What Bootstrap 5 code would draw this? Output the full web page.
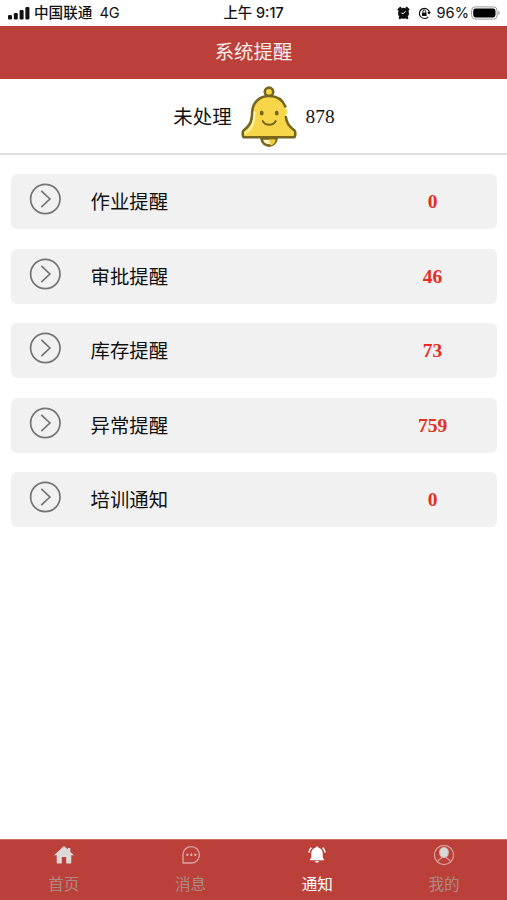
<!DOCTYPE html>
<html lang="zh-CN">
<head>
<meta charset="utf-8">
<meta name="viewport" content="width=device-width, initial-scale=1">
<title>系统提醒</title>
<link href="https://cdn.jsdelivr.net/npm/bootstrap@5.3.0/dist/css/bootstrap.min.css" rel="stylesheet">
<style>
body{font-family:Inter,"Noto Sans CJK SC",sans-serif;color:#111;background:#fff;line-height:1}
svg{display:block;flex:none}
.status{height:26px;font-size:14.6px;font-weight:500;padding:0 6px 0 8px}
.status>div{flex:1 1 0}
.status .clock{flex:none;font-size:14.4px;padding:1px 2px 0 0}
.status .thin{font-weight:400}
.status .network{margin-left:7px}
.status .percent{margin:0 2px 0 6px}
.brand-bg{background:#bb4039}
.title-bar{height:53px;font-size:19.4px;color:#fbeceb;padding-top:1px}
.summary{height:76px;border-bottom:2px solid #dedede;font-size:19.4px;padding-top:1px}
.summary .caption{padding-top:2px;margin-left:1px}
.bell{margin:0 9px 0 9px}
.serif-num{font-family:"Liberation Serif","Times New Roman",serif}
.rows{padding:19px 10px 0 11px;gap:19.5px}
.row-item{height:55px;background:#f1f1f1;border-radius:6px;font-size:19.4px;padding-left:18px}
.row-item svg{margin-top:-5px;margin-right:29.5px}
.row-item .label-text{padding-top:3px}
.row-item .serif-num{width:129px;color:#e32f22;font-size:19.5px;padding-top:1px}
.tabs{height:61px;font-size:15.6px;border-top:1px solid #cf6a65}
.tabs a{color:#ad8a83;padding:4px 0 0 1px;gap:10.5px}
.tabs a.active{color:#fff}
</style>
</head>
<body class="d-flex flex-column vh-100 overflow-hidden">
<div class="status d-flex align-items-center">
  <div class="d-flex align-items-center">
    <svg width="22" height="14" viewBox="0 0 22 14" fill="#111"><rect x="0" y="9" width="4" height="4.5" rx="1.2"/><rect x="5.8" y="7" width="4" height="6.5" rx="1.2"/><rect x="11.6" y="4" width="4" height="9.5" rx="1.2"/><rect x="17.4" y="1" width="4" height="12.5" rx="1.2"/></svg>
    <span class="ms-1">中国联通</span><span class="network thin">4G</span>
  </div>
  <div class="clock">上午 9:17</div>
  <div class="d-flex align-items-center justify-content-end">
    <svg width="13" height="14" viewBox="0 0 13 14"><circle cx="6.5" cy="7.3" r="5.5" fill="#111"/><path d="M1 4.2 4 1.3M12 4.2 9 1.3M2.2 12.8l1.5-1.7M10.8 12.8l-1.5-1.7" stroke="#111" stroke-width="2.2"/><path d="M8.500 5.200 6.300 7.700 4.500 7" stroke="#fff" stroke-width="1" fill="none"/></svg>
    <svg class="ms-2" width="13" height="14" viewBox="0 0 13 14" fill="none" stroke="#111"><path d="M10.3 10.8A5.1 5.1 0 1 1 11.4 6" stroke-width="1.2"/><path d="M9.2 6h3.800l-1.900 2.500z" fill="#111" stroke="none"/><rect x="4" y="6.400" width="4.600" height="3.600" rx=".5" fill="#111" stroke="none"/><path d="M4.900 6.500V5.400a1.400 1.400 0 0 1 2.800 0v1.100"/></svg>
    <span class="percent thin">96%</span>
    <svg width="30" height="14" viewBox="0 0 30 14"><rect x=".6" y=".9" width="25.500" height="12.200" rx="3.600" fill="none" stroke="#999"/><rect x="2.200" y="2.500" width="22.300" height="9" rx="2.400" fill="#000"/><path d="M27.400 5c1.800.7 1.800 3.300 0 4z" fill="#999"/></svg>
  </div>
</div>
<header class="title-bar brand-bg d-flex align-items-center justify-content-center">系统提醒</header>
<section class="summary d-flex align-items-center justify-content-center">
  <span class="caption">未处理</span>
  <svg class="bell" width="56" height="62" viewBox="0 0 56 62" fill="none" stroke="#76651d" stroke-width="2.600" stroke-linecap="round" stroke-linejoin="round">
    <path d="M20.500 52.500c1 9.500 14 9.500 15 0z" fill="#fff5bd"/><path d="M28 53.500h6.500c0 3-2.200 5.500-5 6z" fill="#f3cc3c" stroke="none"/>
    <circle cx="28" cy="5.800" r="4.200" fill="#f7d84e"/>
    <path d="M44.300 20.500C41.500 13.500 35 10 28 10 18 10 11.500 17 11.200 26 11 36.500 8 40.500 2.500 44.500 1.200 45.500 1.500 51.300 3.200 51.300H52.800C54.500 51.300 54.800 45.500 53.500 44.500 48 40.500 45.200 37 44.900 31" fill="#f7d749"/>
    <path d="M13.500 26c0 11-2 16-9 21.500" stroke="#fff2ae" stroke-width="2"/>
    <path d="M45.200 23.500v4.500" stroke="#f7d749" stroke-width="2" stroke-linecap="butt"/>
    <ellipse cx="20.700" cy="27" rx="1.900" ry="2.600" fill="#76651d" stroke="none"/><ellipse cx="35.700" cy="27" rx="1.900" ry="2.600" fill="#76651d" stroke="none"/><path d="M21.700 35c2.500 5 10.500 5 13 0" stroke-width="1.900"/>
  </svg>
  <span class="serif-num">878</span>
</section>
<main class="rows d-flex flex-column flex-grow-1">
  <div class="row-item d-flex align-items-center"><svg width="32" height="32" viewBox="0 0 32 32" fill="none" stroke="#747474" stroke-width="1.700"><circle cx="16.300" cy="16" r="14.700"/><path d="m12.300 7.800 8.600 8.200-8.600 8.200"/></svg><span class="label-text flex-grow-1">作业提醒</span><b class="serif-num text-center">0</b></div>
  <div class="row-item d-flex align-items-center"><svg width="32" height="32" viewBox="0 0 32 32" fill="none" stroke="#747474" stroke-width="1.700"><circle cx="16.300" cy="16" r="14.700"/><path d="m12.300 7.800 8.600 8.200-8.600 8.200"/></svg><span class="label-text flex-grow-1">审批提醒</span><b class="serif-num text-center">46</b></div>
  <div class="row-item d-flex align-items-center"><svg width="32" height="32" viewBox="0 0 32 32" fill="none" stroke="#747474" stroke-width="1.700"><circle cx="16.300" cy="16" r="14.700"/><path d="m12.300 7.800 8.600 8.200-8.600 8.200"/></svg><span class="label-text flex-grow-1">库存提醒</span><b class="serif-num text-center">73</b></div>
  <div class="row-item d-flex align-items-center"><svg width="32" height="32" viewBox="0 0 32 32" fill="none" stroke="#747474" stroke-width="1.700"><circle cx="16.300" cy="16" r="14.700"/><path d="m12.300 7.800 8.600 8.200-8.600 8.200"/></svg><span class="label-text flex-grow-1">异常提醒</span><b class="serif-num text-center">759</b></div>
  <div class="row-item d-flex align-items-center"><svg width="32" height="32" viewBox="0 0 32 32" fill="none" stroke="#747474" stroke-width="1.700"><circle cx="16.300" cy="16" r="14.700"/><path d="m12.300 7.800 8.600 8.200-8.600 8.200"/></svg><span class="label-text flex-grow-1">培训通知</span><b class="serif-num text-center">0</b></div>
</main>
<nav class="tabs brand-bg nav nav-fill flex-nowrap">
  <a class="d-flex flex-column align-items-center text-decoration-none col-3" href="#"><svg width="22" height="22" viewBox="0 0 22 22"><path d="M11 2 1 11.200h2.700V18.500q0 1 1 1H8.800V13h4.400v6.500h4.100q1 0 1-1V11.200H21L17.300 7.800V4h-2.500v1.500z" fill="#ddd9d8"/></svg><span>首页</span></a>
  <a class="d-flex flex-column align-items-center text-decoration-none col-3" href="#"><svg width="22" height="22" viewBox="0 0 22 22" fill="none" stroke="#dca39d" stroke-width="1.400"><path d="M3 19V10.500A8.200 8.200 0 1 1 11.200 19z" stroke-linejoin="round"/><g fill="#e3aaa5" stroke="none"><circle cx="7.300" cy="10.700" r="1.200"/><circle cx="11.300" cy="10.700" r="1.200"/><circle cx="15.300" cy="10.700" r="1.200"/></g></svg><span>消息</span></a>
  <a class="active d-flex flex-column align-items-center text-decoration-none col-3" href="#"><svg width="22" height="22" viewBox="0 0 22 22" fill="#fff"><path d="M11 2.500q1.300 0 1.500 1.300c2.700.8 4.200 2.700 4.200 5.200v4.500l1.400 2v.8H3.900v-.8l1.400-2V9c0-2.500 1.500-4.400 4.200-5.200Q9.700 2.500 11 2.500M9 17h4q-.3 1.800-2 1.800T9 17"/><path d="M5.400 3.600Q3.200 5.500 2.800 8.600M16.600 3.600q2.200 1.900 2.600 5" fill="none" stroke="#fff" stroke-width="1.400"/></svg><span>通知</span></a>
  <a class="d-flex flex-column align-items-center text-decoration-none col-3" href="#"><svg width="22" height="22" viewBox="0 0 22 22" fill="none" stroke="#d6a19a" stroke-width="1.200"><circle cx="11" cy="11" r="9.600"/><ellipse cx="11" cy="8.500" rx="4.300" ry="5" fill="#d5dcdb" stroke="#dbb9b3"/><path d="M8.800 13.200q-.2 1.500-2 2-2 .8-2.200 2.800M13.200 13.200q.2 1.500 2 2 2 .8 2.200 2.800"/></svg><span>我的</span></a>
</nav>
<script src="https://cdn.jsdelivr.net/npm/bootstrap@5.3.0/dist/js/bootstrap.bundle.min.js"></script>
</body>
</html>
